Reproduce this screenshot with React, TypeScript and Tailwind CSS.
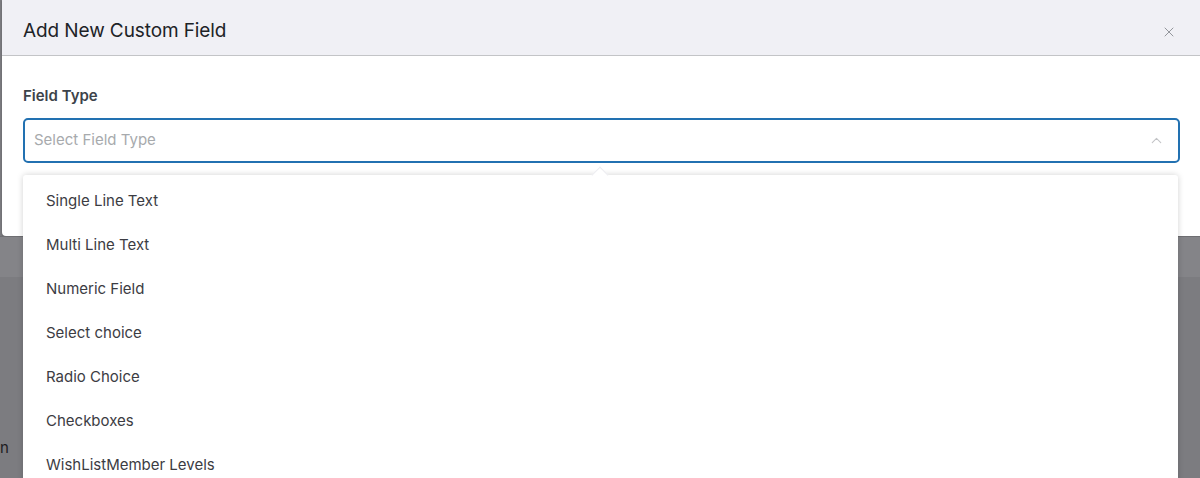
import { X, ChevronUp } from "lucide-react";

const fieldTypes = [
  "Single Line Text",
  "Multi Line Text",
  "Numeric Field",
  "Select choice",
  "Radio Choice",
  "Checkboxes",
  "WishListMember Levels",
];

export default function App() {
  return (
    <div
      className="relative w-[1200px] h-[478px] overflow-hidden bg-[#7c7c80]"
      style={{ fontFamily: "Inter, 'Noto Sans', sans-serif" }}
    >
      {/* modal */}
      <div className="ml-[2px] h-[236px] bg-white rounded-bl-[4px] shadow-[0_1px_2px_rgba(0,0,0,0.3)]">
        <div className="h-[56px] flex items-center justify-between pt-[8px] pl-[21px] pr-[23px] bg-[#f0f0f5] border-b border-[#c3c4c7]">
          <h2 className="text-[19px] text-[#1d2327] tracking-[-0.1px]">Add New Custom Field</h2>
          <X size={16} strokeWidth={1.4} className="text-[#8c8f94]" />
        </div>
        <div className="pl-[21px] pr-[20px] pt-[31px]">
          <div className="text-[15px] font-semibold text-[#3c434a] leading-[18px]">Field Type</div>
          <div className="mt-[13px] h-[45px] border-2 border-[#2271b1] rounded-[5px] flex items-center justify-between pl-[9px] pr-[13px]">
            <span className="text-[15px] text-[#a7aaad]">Select Field Type</span>
            <ChevronUp size={17} strokeWidth={1.5} className="text-[#c3c4c7]" />
          </div>
        </div>
      </div>

      {/* page beneath the overlay */}
      <div className="h-[41px] bg-[#848488] border-t border-[#6e6e72]" />
      <div className="pt-[158px]">
        <span className="text-[15px] text-[#1d1d1f]">n</span>
      </div>

      {/* dropdown */}
      <div className="absolute left-[23px] top-[175px] w-[1155px] h-[310px] bg-white rounded-[3px] shadow-[0_0_6px_rgba(0,0,0,0.18)] pt-[4px]">
        <div className="absolute -top-[6px] left-[571px] w-[12px] h-[12px] bg-white rotate-45 border-l border-t border-[#ececf0]" />
        <ul className="relative">
          {fieldTypes.map((t) => (
            <li key={t} className="h-[44px] flex items-center px-[23px] text-[15px] text-[#3c3c43]">
              {t}
            </li>
          ))}
        </ul>
      </div>
    </div>
  );
}
